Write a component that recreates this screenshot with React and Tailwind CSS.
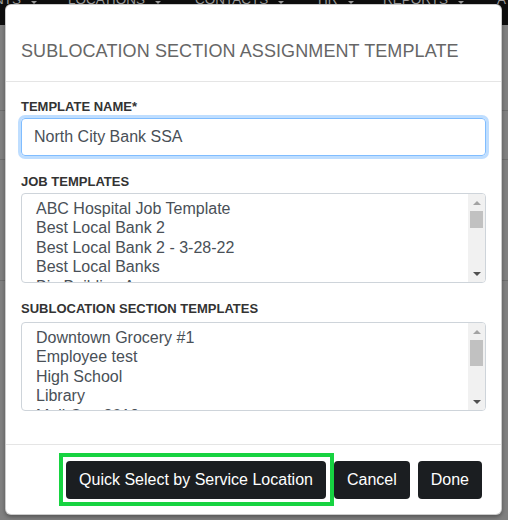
import React from "react";

const FONT = { fontFamily: '"Liberation Sans", Arial, sans-serif' };

const jobTemplates = [
  "ABC Hospital Job Template",
  "Best Local Bank 2",
  "Best Local Bank 2 - 3-28-22",
  "Best Local Banks",
  "Big Building A",
];

const sectionTemplates = [
  "Downtown Grocery #1",
  "Employee test",
  "High School",
  "Library",
  "Mall Oct. 2019",
];

// top navigation of the page under the dialog backdrop
const navItems = [
  { label: "NTS", w: "w-[74px]" },
  { label: "LOCATIONS", w: "w-[127px]" },
  { label: "CONTACTS", w: "w-[123px]" },
  { label: "HR", w: "w-[65px]" },
  { label: "REPORTS", w: "w-[114px]" },
  { label: "A", w: "w-[40px]" },
];

function Scrollbar({ thumbClass }) {
  return (
    <div className="flex w-[17px] shrink-0 flex-col bg-[#f1f1f1]">
      <div className="flex h-[17px] shrink-0 items-center justify-center">
        <div className="h-0 w-0 border-x-[4px] border-b-[4px] border-x-transparent border-b-[#a3a3a3]" />
      </div>
      <div className="flex-1">
        <div className={`mx-[2px] bg-[#c1c1c1] ${thumbClass}`} />
      </div>
      <div className="flex h-[17px] shrink-0 items-center justify-center">
        <div className="h-0 w-0 border-x-[4px] border-t-[4px] border-x-transparent border-t-[#505050]" />
      </div>
    </div>
  );
}

function ListBox({ items, heightClass, thumbClass }) {
  return (
    <div
      className={`flex overflow-hidden rounded-[4px] border border-[#ced4da] bg-white ${heightClass}`}
    >
      <div className="min-w-0 flex-1 overflow-hidden pl-[12px] pt-[6px] text-[16px] text-[#495057]">
        {items.map((t) => (
          <div key={t} className="whitespace-nowrap px-[2px] pb-px leading-[18.4px]">
            {t}
          </div>
        ))}
      </div>
      <Scrollbar thumbClass={thumbClass} />
    </div>
  );
}

function FieldLabel({ children, className = "" }) {
  return (
    <div
      className={`text-[13px] font-bold uppercase leading-[20px] text-[#333] ${className}`}
    >
      {children}
    </div>
  );
}

export default function App() {
  return (
    <div
      className="relative h-[520px] w-[508px] overflow-hidden bg-[#808080]"
      style={FONT}
    >
      {/* page behind the backdrop */}
      <div className="flex h-[25px] bg-[#0e0e0e]">
        <div className="-ml-[6px] -mt-[7px] flex h-[14px] shrink-0 text-[13.5px] leading-[14px] text-[#9a9a9a]">
          {navItems.map((n, i) => (
            <div key={n.label} className={`flex shrink-0 items-end ${n.w}`}>
              <span>{n.label}</span>
              {i < navItems.length - 1 && (
                <span className="mb-[3px] ml-[10px] h-0 w-0 border-x-[3px] border-t-[3px] border-x-transparent border-t-[#9a9a9a]" />
              )}
            </div>
          ))}
        </div>
      </div>
      <div className="h-[86px] border-b border-[#6e6e6e]" />
      <div className="h-[49px] border-b border-[#6e6e6e]" />
      <div className="h-[121px] border-b border-[#6e6e6e]" />

      {/* dialog */}
      <div className="absolute left-[5px] top-[4px] flex w-[497px] flex-col rounded-[6px] border border-black/20 bg-white shadow-[0_2px_4px_rgba(0,0,0,0.35)]">
        <div className="border-b border-[#e5e5e5] px-[15px] pb-[16px] pt-[32px]">
          <div className="text-[18px] leading-[28px] tracking-[0.1px] text-[#666]">
            SUBLOCATION SECTION ASSIGNMENT TEMPLATE
          </div>
        </div>

        <div className="flex flex-col px-[15px] pb-[33px] pt-[15px]">
          <FieldLabel className="mb-px">Template Name*</FieldLabel>
          <div className="flex h-[38px] items-center rounded-[4px] border border-[#80bdff] px-[12px] text-[16px] text-[#495057] shadow-[0_0_0_3px_rgba(0,123,255,0.25)]">
            North City Bank SSA
          </div>

          <FieldLabel className="mb-px mt-4">Job Templates</FieldLabel>
          <ListBox
            items={jobTemplates}
            heightClass="h-[90px]"
            thumbClass="h-[17px]"
          />

          <FieldLabel className="mb-[3px] mt-4">
            Sublocation Section Templates
          </FieldLabel>
          <ListBox
            items={sectionTemplates}
            heightClass="h-[89px]"
            thumbClass="h-[26px]"
          />
        </div>

        <div className="flex justify-end gap-2 border-t border-[#e5e5e5] pb-[15px] pl-4 pr-[19px] pt-4">
          <button className="relative h-[38px] rounded-[4px] bg-[#1b1e21] px-[13px] text-[16px] text-white">
            Quick Select by Service Location
            <span className="pointer-events-none absolute -bottom-[7px] -left-[7px] -right-[8px] -top-[8px] border-4 border-[#17d341]" />
          </button>
          <button className="h-[38px] rounded-[4px] bg-[#1b1e21] px-[13px] text-[16px] text-white">
            Cancel
          </button>
          <button className="h-[38px] rounded-[4px] bg-[#1b1e21] px-[13px] text-[16px] text-white">
            Done
          </button>
        </div>
      </div>
    </div>
  );
}
